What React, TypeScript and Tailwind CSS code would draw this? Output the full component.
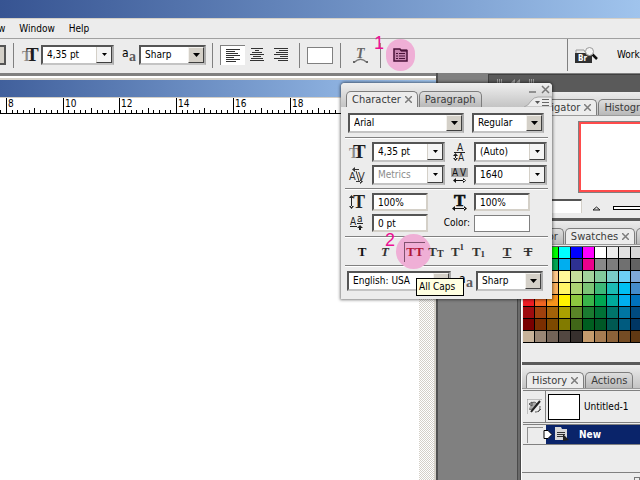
import { FC, ReactNode } from "react";
import { clsx } from "clsx";

const SWATCHES: string[][] = [
  ["#ff0000", "#ffff00", "#00ff00", "#00ffff", "#0000ff", "#ff00ff", "#ffffff", "#ececec", "#e1e1e1", "#d7d7d7"],
  ["#ed1c24", "#fff200", "#00a651", "#00aeef", "#2e3192", "#ec008c", "#898989", "#7d7d7d", "#707070", "#626262"],
  ["#f7977a", "#f9ad81", "#fdc689", "#fff799", "#c4df9b", "#a3d39c", "#82ca9c", "#7accc8", "#6dcff6", "#7ea7d8"],
  ["#f26c4f", "#f68e56", "#fbaf5d", "#fff568", "#acd373", "#7cc576", "#3cb878", "#1cbbb4", "#00bff3", "#448ccb"],
  ["#ed1c24", "#f26522", "#f7941d", "#fff200", "#8dc73f", "#39b54a", "#00a651", "#00a99d", "#00aeef", "#0072bc"],
  ["#9e0b0f", "#a0410d", "#a36209", "#aba000", "#598527", "#1a7b30", "#007236", "#00746b", "#0076a3", "#004b80"],
  ["#790000", "#7b2e00", "#7d4900", "#827b00", "#406618", "#005e20", "#005826", "#005952", "#005b7f", "#003663"],
  ["#c7b299", "#998675", "#736357", "#534741", "#37302d", "#c69c6d", "#a67c52", "#8c6239", "#754c24", "#603913"],
];

const SERIF = "Liberation Serif, serif";
const SANS = "DejaVu Sans Condensed, Noto Sans, sans-serif";

type ComboProps = {
  label: string;
  value: string;
  className?: string;
  raised?: boolean;
  disabled?: boolean;
};

const Combo: FC<ComboProps> = ({ label, value, className, raised, disabled }) => (
  <div
    className={clsx(
      "flex h-5 shrink-0 border-2 border-t-[#555555] border-l-[#555555] border-r-[#acacac] border-b-[#c4c4c4] bg-white",
      className
    )}
  >
    <select
      aria-label={label}
      disabled={disabled}
      className={clsx(
        "min-w-0 flex-1 appearance-none bg-transparent pl-1 leading-4 outline-none",
        disabled ? "text-[#8c8c8c]" : "text-black"
      )}
    >
      <option>{value}</option>
    </select>
    <span
      className={clsx(
        "pointer-events-none flex w-4 shrink-0 items-center justify-center border-r border-b border-[#404040]",
        raised ? "border-t border-l border-t-[#f4f2ee] border-l-[#f4f2ee] bg-[#d4d0c8]" : "border-l border-l-[#d4d0c8] bg-[#f4f4f4]"
      )}
    >
      {raised ? (
        <svg width="7" height="4"><path d="M0 0h7L3.500 4z" /></svg>
      ) : (
        <svg width="5" height="3"><path d="M0 0h5L2.500 3z" /></svg>
      )}
    </span>
  </div>
);

const Field: FC<{ label: string; value: string }> = ({ label, value }) => (
  <input
    aria-label={label}
    defaultValue={value}
    className="h-[18px] w-14 border-2 border-t-[#555555] border-l-[#555555] border-r-[#d4d0c8] border-b-[#d4d0c8] bg-white pl-1 leading-4 outline-none"
  />
);

type TabProps = { children: ReactNode; active?: boolean };

const Tab: FC<TabProps> = ({ children, active }) => (
  <button
    className={clsx(
      "flex h-4 shrink-0 items-center gap-1 rounded-t-[5px] border border-b-0 border-[#7d7d7d] px-[5px] text-[11px] leading-4 text-[#3a3a3a]",
      active ? "bg-[#ececec]" : "bg-linear-to-b from-[#dedede] to-[#b8b8b8]"
    )}
  >
    {children}
    {active && (
      <svg width="7" height="7" stroke="#7d7d7d" strokeWidth="1.500"><path d="M0 0l7 7M7 0L0 7" /></svg>
    )}
  </button>
);

const SizeIcon = () => (
  <svg width="17" height="17" fontFamily={SERIF} fontWeight="bold" overflow="visible">
    <text x="0" y="14" fontSize="14" fill="#8a8a8a">T</text>
    <text x="4" y="14" fontSize="19" fill="#1c1c1c">T</text>
  </svg>
);

const AntiAliasIcon = () => (
  <svg width="15" height="17" fontFamily={SANS} overflow="visible">
    <text x="0" y="10" fontSize="12" fill="#000">a</text>
    <text x="7" y="14" fontSize="14" fontFamily={SERIF} fontWeight="bold" fill="#5c5c5c">a</text>
  </svg>
);

const LeadingIcon = () => (
  <svg width="17" height="17" fontFamily={SANS} fill="#222" overflow="visible">
    <text x="4" y="7" fontSize="10">A</text>
    <text x="5" y="17" fontSize="10">A</text>
    <path d="M1 8h11v1H1zM2 11h1v4H2zM0 12l2.500-3L5 12zM0 14l2.500 3L5 14z" />
  </svg>
);

const KerningIcon = () => (
  <svg width="17" height="17" fontFamily={SANS} fill="#333" overflow="visible">
    <text x="0" y="13" fontSize="11">A</text>
    <text x="9" y="13" fontSize="11">V</text>
    <path d="M7 4l3 10" stroke="#333" />
    <path d="M5 2h5v1H5zM6 0v5L3 2.500zM7 14h5v1H7zM11 12v5l3-2.500z" />
  </svg>
);

const TrackingIcon = () => (
  <svg width="17" height="15" fontFamily={SANS} fill="#111" overflow="visible">
    <path d="M0 0h17v9H0z" fill="#a8a8a8" />
    <text x="1" y="8" fontSize="10">A</text>
    <text x="9" y="8" fontSize="10">V</text>
    <path d="M3 12h11v1H3zM5 10v5l-3-2.500zM12 10v5l3-2.500z" />
  </svg>
);

const VScaleIcon = () => (
  <svg width="17" height="17" fill="#222" overflow="visible">
    <path d="M2 3h1v10H2zM0 4l2.500-3L5 4zM0 12l2.500 3L5 12z" />
    <text x="4" y="14" fontSize="18" fontFamily={SERIF} fontWeight="bold">T</text>
  </svg>
);

const HScaleIcon = () => (
  <svg width="17" height="17" fill="#111" overflow="visible">
    <text x="3" y="12" fontSize="17" fontFamily={SERIF} fontWeight="bold" stroke="#111" strokeWidth="0.700">T</text>
    <path d="M3 14h11v1H3zM4 12v5l-3-2.500zM13 12v5l3-2.500z" />
  </svg>
);

const BaselineIcon = () => (
  <svg width="17" height="17" fontFamily={SANS} fill="#222" overflow="visible">
    <text x="1" y="10" fontSize="10">A</text>
    <text x="8" y="7" fontSize="10">a</text>
    <path d="M1 11h7v1H1zM8 8h6v1H8zM10 12h2v3h-2zM8 13l3-3 3 3z" />
  </svg>
);

const AlignIcon: FC<{ align: "left" | "center" | "right" }> = ({ align }) => {
  const widths = align === "center" ? [12, 4, 10, 14, 8, 12, 14] : [14, 9, 12, 14, 8, 14, 10];
  return (
    <svg width="14" height="14" fill="#333">
      {widths.map((w, i) => {
        const x = align === "left" ? 0 : align === "center" ? (14 - w) / 2 : 14 - w;
        return <rect key={i} x={x} y={i * 2} width={w} height="1" />;
      })}
    </svg>
  );
};

const WarpIcon = () => (
  <svg width="15" height="17" fill="#666" overflow="visible">
    <text x="3" y="11" fontSize="14" fontFamily={SERIF} fontWeight="bold" fontStyle="italic">T</text>
    <path d="M1 15.500Q7.500 9 14 15.500" fill="none" stroke="#777" strokeWidth="1.500" />
    <path d="M0 14h2v2H0zM13 14h2v2h-2z" />
  </svg>
);

const PanelIcon = () => (
  <svg width="15" height="14" fill="none" stroke="#4a1238">
    <path d="M1 13V1h6l1 1.500h6V13z" fill="#c886b0" strokeWidth="1.500" />
    <path d="M8 2.500h6" strokeWidth="2" />
    <path d="M3 5.500h2M3 8h2M3 10.500h2M6 5.500h6M6 8h6M6 10.500h6" />
  </svg>
);

const BridgeIcon = () => (
  <svg width="23" height="17" overflow="visible">
    <path d="M1 3h8l1 2h6v3H1z" fill="#e8e8e8" stroke="#999" />
    <path d="M0 6h17v10H0z" fill="#303030" />
    <text x="3" y="14" fontSize="8" fontWeight="bold" fontFamily={SANS} fill="#fff">Br</text>
    <path d="M17 7l5 5" stroke="#111" strokeWidth="2.500" />
    <circle cx="14.500" cy="4.500" r="4" fill="#f4f4f4" stroke="#999" />
  </svg>
);

const Separator = () => <div className="h-[25px] w-px shrink-0 bg-[#808080]" />;

const Ruler = () => {
  const step = 5.67;
  const ticks = Array.from({ length: 130 }, (_, i) => i);
  return (
    <svg className="block h-4 w-full shrink-0 border-b border-black bg-white" shapeRendering="crispEdges">
      {ticks.map((i) => {
        // the first tick is one step left of the 8 mark
        const x = Math.round(6 + (i - 1) * step);
        const isMajor = (i - 1) % 10 === 0;
        const isUnit = (i - 1) % 5 === 0;
        const h = isMajor ? 15 : isUnit ? 5 : 3;
        return <rect key={i} x={x} y={15 - h} width="1" height={h} fill="#000" />;
      })}
      {[8, 10, 12, 14, 16, 18, 20, 22].map((n, i) => (
        <text key={n} x={8 + Math.round(i * step * 10)} y="9" fontSize="10" fontFamily={SANS}>{n}</text>
      ))}
    </svg>
  );
};

const OptionsBar = () => (
  <div className="flex h-[35px] shrink-0 items-center border-t border-[#a0a0a0] bg-[#ececec] pb-0.5">
    <div className="h-5 w-1.5 border-2 border-l-0 border-[#555555] bg-[#d4d0c8]" />
    <div className="ml-[7px]"><Separator /></div>
    <div className="mr-0.5 ml-2"><SizeIcon /></div>
    <Combo label="Font size" value="4,35 pt" className="w-[73px]" />
    <div className="ml-2 mr-0.5"><AntiAliasIcon /></div>
    <Combo label="Anti-aliasing" value="Sharp" raised className="w-[67px]" />
    <div className="ml-1.5"><Separator /></div>
    <div className="ml-[7px] flex">
      <button aria-label="Left align" className="flex h-5 w-[25px] items-center justify-center border-t border-l border-[#808080] bg-white">
        <AlignIcon align="left" />
      </button>
      <button aria-label="Center align" className="flex h-5 w-6 items-center justify-center"><AlignIcon align="center" /></button>
      <button aria-label="Right align" className="flex h-5 w-6 items-center justify-center"><AlignIcon align="right" /></button>
    </div>
    <div className="ml-1.5"><Separator /></div>
    <button aria-label="Text color" className="mx-[7px] h-[17px] w-[26px] border border-[#808080] bg-white" />
    <Separator />
    <button aria-label="Warp text" className="mx-3"><WarpIcon /></button>
    <Separator />
    <button aria-label="Toggle panels" className="relative ml-[5px] flex h-8 w-[29px] items-center justify-center rounded-full bg-[#efafd6]">
      <PanelIcon />
      <span className="absolute -top-1.5 -left-3 font-['Liberation_Sans',sans-serif] text-lg leading-5 text-[#ec1093]">1</span>
    </button>
    <div className="ml-auto h-8 w-px bg-[#808080]" />
    <button aria-label="Go to Bridge" className="ml-[7px] shrink-0"><BridgeIcon /></button>
    <button className="ml-[19px] w-[23px] overflow-hidden whitespace-nowrap text-left leading-4">Workspace</button>
  </div>
);

const PanelTabs: FC<{ children: ReactNode }> = ({ children }) => (
  <div className="flex h-6 shrink-0 items-end gap-px overflow-hidden border-b border-[#9a9a9a] bg-linear-to-b from-[#ececec] to-[#c4c4c4] pl-1">
    {children}
  </div>
);

const Dock = () => (
  <aside className="flex w-38 shrink-0 flex-col">
    <div className="mt-px flex h-[18px] shrink-0 items-start gap-2 border-t border-l border-[#404040] bg-[#5a5a5a] px-2 pt-1 text-[#a0a0a0]">
      <svg width="6" height="7" fill="currentColor"><path d="M0 0h1v7H0zM2 0h1v7H2zM4 0h1v7H4z" /></svg>
      <svg width="10" height="7" fill="currentColor"><path d="M4 0v7L0 3.500zM9 0v7L5 3.500z" /></svg>
      <svg width="6" height="7" fill="currentColor"><path d="M0 0h1v7H0zM2 0h1v7H2zM4 0h1v7H4z" /></svg>
    </div>
    <div className="flex min-h-0 flex-1">
      <div className="flex-1 bg-[#808080]" />
      <div className="w-1 border-x border-[#4a4a4a] bg-[#6a6a6a]" />
      <div className="flex w-[119px] flex-col overflow-hidden border-l border-white bg-[#ececec]">
        <section className="flex h-[129px] shrink-0 flex-col">
          <PanelTabs>
            <Tab active>Navigator</Tab>
            <Tab>Histogram</Tab>
          </PanelTabs>
          <div className="mt-[5px] ml-14 h-[72px] w-24 border border-[#808080] bg-white">
            <div className="h-full border-2 border-[#ff4b4b]" />
          </div>
          <div className="mt-1.5 flex h-[14px] items-center">
            <input aria-label="Zoom" className="h-3.5 w-[60px] border-t-2 border-r border-t-[#555555] border-r-[#d4d0c8] bg-white" />
            <svg className="mt-1 ml-2.5" width="9" height="5" fill="#ddd" stroke="#222"><path d="M1 4l3.500-3 3.500 3z" /></svg>
            <div className="mt-1 ml-3 h-1 flex-1 border border-r-0 border-black bg-white" />
          </div>
          <div className="mt-auto border-b-[3px] border-[#5a5a5a]" />
        </section>
        <section className="flex h-[144px] shrink-0 flex-col">
          <PanelTabs>
            <Tab>Color</Tab>
            <Tab active>Swatches</Tab>
            <Tab>Styles</Tab>
          </PanelTabs>
          <div className="mt-px ml-px grid w-[120px] grid-cols-10 border-t border-[#555555]">
            {SWATCHES.flat().map((color, i) => (
              <button
                key={i}
                aria-label={color}
                className="h-3 border-r border-b border-black"
                style={{ backgroundColor: color }}
              />
            ))}
          </div>
          <div className="mt-auto border-b-[3px] border-[#5a5a5a]" />
        </section>
        <section className="flex flex-1 flex-col">
          <PanelTabs>
            <Tab active>History</Tab>
            <Tab>Actions</Tab>
          </PanelTabs>
          <div className="mt-px ml-px flex h-[33px] shrink-0 items-center border-t border-b border-[#808080]">
            <div className="flex h-full w-[23px] items-center justify-center border-r border-[#808080]">
              <svg width="15" height="15" fill="none" stroke="#555">
                <path d="M0 15V0h15" stroke="#909090" />
                <path d="M2 5l3-2v4zM4 4c4-2 7 0 5 3s-5 4-7 3" fill="#aaa" />
                <path d="M13 2L8 8l-4 5" stroke="#222" strokeWidth="2" />
                <path d="M8 13c4 0 5-2 5-6M11 13l3-3" />
              </svg>
            </div>
            <div className="ml-0.5 h-[26px] w-8 border border-black bg-white" />
            <span className="ml-1 leading-4 text-black">Untitled-1</span>
          </div>
          <div className="mt-px ml-px flex h-[21px] shrink-0 items-center border-t border-b border-[#808080]">
            <div className="flex h-full w-[23px] items-center pl-1">
              <div className="h-4 w-4 border-t border-l border-[#909090]" />
            </div>
            <div className="flex h-full flex-1 items-center bg-[#0a246a]">
              <svg className="-ml-[3px]" width="27" height="17">
                <path d="M1 4.500h4l4 4-4 4H1z" fill="#fff" stroke="#000" />
                <path d="M12 1h6l1 2h5v11H12z" fill="#d8d8d8" />
                <path d="M14 6.500h8M14 8.500h8M14 10.500h6" stroke="#333" />
                <path d="M20 8l6 6-6 1z" fill="#222" />
              </svg>
              <span className="ml-[9px] font-bold leading-4 text-white">New</span>
            </div>
          </div>
          <div className="mt-auto flex h-2 shrink-0 justify-end border-t border-[#808080]">
            <div className="mt-1 h-1 w-1.5 border border-b-0 border-[#777777]" />
          </div>
        </section>
      </div>
    </div>
  </aside>
);

const Rule = () => <div className="mx-1 h-0.5 shrink-0 border-t border-[#808080] bg-white" />;

const StyleButton: FC<{ label: string; className?: string; children: ReactNode }> = ({ label, className, children }) => (
  <button
    aria-label={label}
    className={clsx("flex h-5 items-center justify-center font-['Liberation_Serif',serif] text-[13px] leading-4 font-bold text-[#333333]", className)}
  >
    {children}
  </button>
);

const CharacterPanel = () => (
  <section className="absolute top-[83px] left-[341px] flex w-[211px] flex-col rounded-t-sm bg-[#ececec] pb-2 shadow-[0_0_3px_1px_rgba(0,0,0,0.5)]">
    <header className="flex h-6 rounded-t-sm bg-linear-to-b from-[#efefef] to-[#c4c4c4] pl-[5px]">
      <div className="flex items-end gap-px">
        <Tab active>Character</Tab>
        <Tab>Paragraph</Tab>
      </div>
      <div className="ml-auto flex flex-col items-end justify-between">
        <svg className="mt-0.5 mr-0.5" width="21" height="9" fill="none" stroke="#777" strokeWidth="1.500">
          <path d="M0 7h7M13 1l7 7M20 1l-7 7" />
        </svg>
        <svg width="28" height="11">
          <path d="M0 11Q4 10 7 5Q10 1 14 1H28V11z" fill="#ececec" stroke="#a8a8a8" />
          <path d="M11 5h5l-2.500 3z" fill="#555" />
          <path d="M18 3.500h7M18 6.500h7M18 9.500h7" stroke="#666" />
        </svg>
      </div>
    </header>
    <div className="mt-1.5 mb-1 flex gap-2 pl-[7px]">
      <Combo label="Font family" value="Arial" raised className="w-[116px]" />
      <Combo label="Font style" value="Regular" raised className="w-[72px]" />
    </div>
    <Rule />
    <div className="mt-[3px] mb-[3px] grid grid-cols-[23px_73px_29px_73px] items-center gap-y-[3px] pl-2">
      <SizeIcon />
      <Combo label="Size" value="4,35 pt" />
      <span className="pl-2"><LeadingIcon /></span>
      <Combo label="Leading" value="(Auto)" />
      <KerningIcon />
      <Combo label="Kerning" value="Metrics" disabled />
      <span className="pl-1.5"><TrackingIcon /></span>
      <Combo label="Tracking" value="1640" />
    </div>
    <Rule />
    <div className="mt-[3px] mb-1 grid grid-cols-[23px_73px_29px_73px] items-center gap-y-[3px] pl-2">
      <VScaleIcon />
      <Field label="Vertical scale" value="100%" />
      <span className="pl-1.5"><HScaleIcon /></span>
      <Field label="Horizontal scale" value="100%" />
      <BaselineIcon />
      <Field label="Baseline shift" value="0 pt" />
      <label htmlFor="text-color" className="justify-self-end pr-1 leading-4">Color:</label>
      <button id="text-color" className="h-[17px] w-14 border border-[#808080] bg-white" />
    </div>
    <Rule />
    <div className="relative flex h-[27px] items-center pl-[9px]">
      <span className="absolute -top-1 left-[55px] h-[35px] w-[35px] rounded-full bg-[#efafd6]" />
      <span className="absolute -top-2 left-11 z-10 font-['Liberation_Sans',sans-serif] text-lg leading-5 text-[#ec1093]">2</span>
      <StyleButton label="Faux bold" className="w-6"><span className="text-[#111111]">T</span></StyleButton>
      <StyleButton label="Faux italic" className="mr-2 w-[22px] italic">T</StyleButton>
      <button aria-label="All caps" className="relative flex h-5 w-[21px] items-center justify-center border-t border-l border-[#80506e] font-['Liberation_Serif',serif] text-[13px] font-bold leading-4 text-[#b01838]">
        TT
      </button>
      <StyleButton label="Small caps" className="relative w-[22px]">T<span className="pt-1 text-[10px]">T</span></StyleButton>
      <StyleButton label="Superscript" className="w-[21px]">T<sup className="text-[9px]">1</sup></StyleButton>
      <StyleButton label="Subscript" className="w-[21px]">T<sub className="text-[9px]">1</sub></StyleButton>
      <StyleButton label="Underline" className="ml-1.5 w-6 underline">T</StyleButton>
      <StyleButton label="Strikethrough" className="w-[18px] line-through">T</StyleButton>
    </div>
    <Rule />
    <div className="relative mt-1 flex items-center pl-1.5">
      <Combo label="Language" value="English: USA" raised className="w-[104px]" />
      <span className="ml-2 mr-0.5"><AntiAliasIcon /></span>
      <Combo label="Anti-aliasing method" value="Sharp" raised className="w-[67px]" />
      <div role="tooltip" className="absolute top-[7px] left-[75px] w-12 border border-black bg-[#ffffe1] px-0.5 leading-4">All Caps</div>
    </div>
  </section>
);

export default function App() {
  return (
    <div className="relative flex h-screen flex-col overflow-hidden bg-[#808080] font-['DejaVu_Sans_Condensed','Noto_Sans',sans-serif] text-[10px] text-black">
      <div className="h-[18px] shrink-0 bg-linear-to-r from-[#375492] to-[#a0c4ed]" />
      <nav className="flex h-5 shrink-0 items-center gap-3.5 overflow-hidden border-t border-[#d4d0c8] bg-[#ececec] leading-4">
        <a href="#view" className="-ml-4">View</a>
        <a href="#window">Window</a>
        <a href="#help">Help</a>
      </nav>
      <OptionsBar />
      <main className="flex min-h-0 flex-1">
        <div className="flex min-w-0 flex-1 flex-col pt-[3px]">
          <div className="shrink-0 border-t-2 border-white">
            <div className="h-5 border-t-2 border-b border-[#d4d0c8] bg-linear-to-r from-[#41609c] to-[#a3c8f2]" />
          </div>
          <div className="flex min-h-0 flex-1">
            <div className="flex min-w-0 flex-1 flex-col bg-white">
              <Ruler />
            </div>
            <div className="w-[15px] bg-[conic-gradient(#d4d0c8_25%,#ffffff_0_50%,#d4d0c8_0_75%,#ffffff_0)] bg-size-[2px_2px]" />
            <div className="w-0.5 bg-[#d4d0c8]" />
          </div>
        </div>
        <div className="w-[52px] shrink-0 border-l-2 border-[#505050]" />
        <Dock />
      </main>
      <CharacterPanel />
    </div>
  );
}
